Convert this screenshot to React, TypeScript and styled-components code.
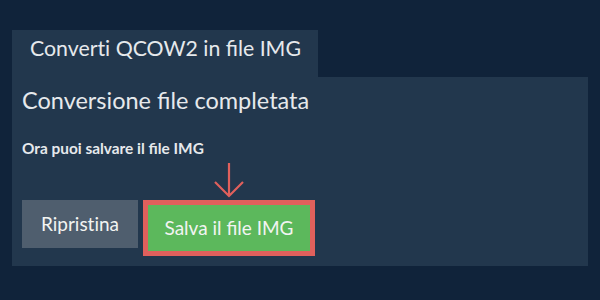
import React from "react";
import styled, { createGlobalStyle } from "styled-components";

const Global = createGlobalStyle`
  html, body { margin: 0; padding: 0; background: #10233a; }
  body { font-family: Lato, "Noto Sans", sans-serif; }
`;

const Page = styled.div`
  width: 600px;
  height: 300px;
  box-sizing: border-box;
  padding: 30px 12px 0 12px;
  background: #10233a;
`;

const Tab = styled.div`
  display: inline-block;
  background: #22374d;
  color: #e6e9ec;
  font-size: 21.3px;
  line-height: 25px;
  padding: 6px 17px 16px 18px;
  white-space: nowrap;
`;

const Panel = styled.div`
  background: #22374d;
  padding: 9px 10px 10px 10px;
  color: #e6e9ec;
`;

const Heading = styled.h2`
  margin: 0;
  font-size: 23.5px;
  font-weight: 400;
  line-height: 28px;
  white-space: nowrap;
`;

const Note = styled.p`
  margin: 25px 0 0 0;
  font-size: 15.4px;
  font-weight: 700;
  line-height: 18px;
  white-space: nowrap;
`;

const Actions = styled.div`
  display: flex;
  align-items: flex-start;
  gap: 5px;
  margin-top: 43px;
`;

const Button = styled.button<{ $variant: "neutral" | "primary" }>`
  font-family: Lato, "Noto Sans", sans-serif;
  font-size: 19px;
  line-height: 22px;
  color: #f2f4f2;
  border: none;
  margin: 0;
  cursor: pointer;
  text-align: center;
  white-space: nowrap;
  box-sizing: border-box;
  background: ${(p) => (p.$variant === "primary" ? "#5cb85c" : "#4f5e6e")};
  padding: ${(p) => (p.$variant === "primary" ? "12px 0" : "13px 0")};
  width: ${(p) => (p.$variant === "primary" ? "162px" : "116px")};
`;

const Highlight = styled.div`
  position: relative;
  display: flex;
  border: 5px solid #e0605c;
`;

const Arrow = styled.svg`
  position: absolute;
  left: 64.5px;
  top: -43px;
  width: 32px;
  height: 36px;
  overflow: visible;
`;

export default function App() {
  return (
    <>
      <Global />
      <Page>
        <Tab>{"Convert\u200Ci QCOW2 in file IMG"}</Tab>
        <Panel>
          <Heading>Conversione file completata</Heading>
          <Note>Ora puoi salvare il file IMG</Note>
          <Actions>
            <Button $variant="neutral">{"Riprist\u200Cina"}</Button>
            <Highlight>
              <Arrow viewBox="0 0 32 36">
                <path
                  d="M16 1 V34 M2 20 L16 34 L30 20"
                  fill="none"
                  stroke="#e0605c"
                  strokeWidth="2.2"
                />
              </Arrow>
              <Button $variant="primary">Salva il file IMG</Button>
            </Highlight>
          </Actions>
        </Panel>
      </Page>
    </>
  );
}
